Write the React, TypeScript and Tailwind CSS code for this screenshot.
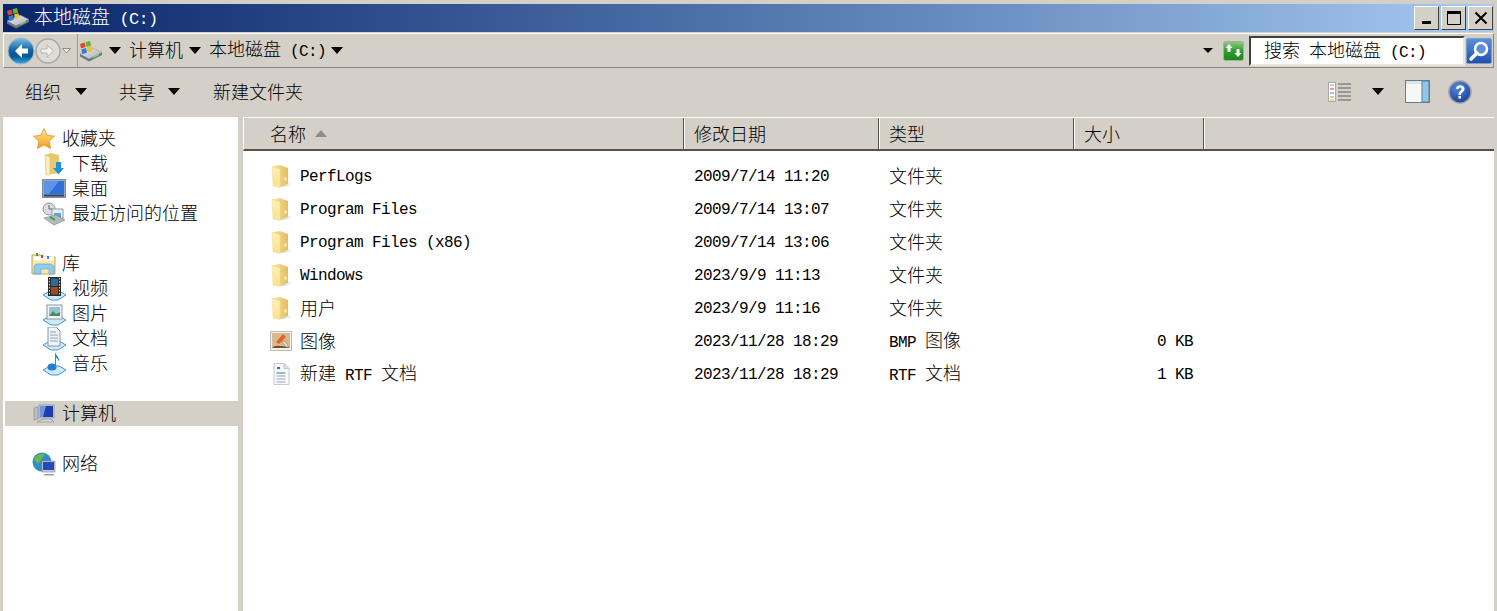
import type { ReactNode } from "react";

// Latin runs are half width mono, CJK runs are full width
function T({ children, big }: { children: string; big?: boolean }) {
  const parts = children.split(/([\x00-\x7f]+)/).filter(Boolean);
  return (
    <span className="whitespace-pre">
      {parts.map((p, i) =>
        /^[\x00-\x7f]+$/.test(p) ? (
          <span key={i} className={big ? "font-['Liberation_Mono',monospace] text-[17px] tracking-[-0.7px]" : "font-['Liberation_Mono',monospace] text-[16px] tracking-[-0.6px]"}>
            {p}
          </span>
        ) : (
          <span key={i} className={big ? "font-['Noto_Sans_CJK_SC',sans-serif] text-[19px] font-light" : "font-['Noto_Sans_CJK_SC',sans-serif] text-[18px] font-light"}>
            {p}
          </span>
        )
      )}
    </span>
  );
}

function Caret({ className = "" }: { className?: string }) {
  return (
    <svg width="12" height="7" viewBox="0 0 12 7" className={className}>
      <path d="M0 0h12L6 7z" fill="#000" />
    </svg>
  );
}

function DriveIcon({ size = 24 }: { size?: number }) {
  return (
    <svg width={size} height={size} viewBox="0 0 24 24">
      <defs>
        <linearGradient id="dr" x1="0" y1="0" x2="1" y2="1">
          <stop offset="0" stopColor="#e8ecef" />
          <stop offset="1" stopColor="#a9b0b6" />
        </linearGradient>
      </defs>
      <path d="M1 15 14 9l9 4.500L10 20z" fill="url(#dr)" stroke="#8a8f94" strokeWidth=".5" />
      <path d="M1 15v2.500L10 22.500 23 16v-2.500L10 20z" fill="#6f777e" />
      <path d="M14 18.500l6-3" stroke="#7fe05a" strokeWidth="1.200" />
      <path d="M1 5l4.500-1.500 1.200 4.500L2 9.500z" fill="#dc4a28" />
      <path d="M6.500 3.200 11 2l1.200 4.500L7.700 8z" fill="#6ab42e" />
      <path d="M2.300 10.500l4.600-1.600 1.200 4.500-4.600 1.800z" fill="#2c7fd6" />
      <path d="M8 8.600l4.500-1.300 1.200 4.500-4.500 1.500z" fill="#f2c12e" />
    </svg>
  );
}

function FolderIcon() {
  return (
    <svg width="24" height="24" viewBox="0 0 24 24">
      <defs>
        <linearGradient id="fd" x1="0" y1="0" x2="1" y2="0">
          <stop offset="0" stopColor="#f7e7a4" />
          <stop offset="1" stopColor="#e3bd5e" />
        </linearGradient>
        <linearGradient id="fd2" x1="0" y1="0" x2="0" y2="1">
          <stop offset="0" stopColor="#fdf0b4" />
          <stop offset="1" stopColor="#fbe387" />
        </linearGradient>
        <linearGradient id="fs" x1="0" y1="0" x2="1" y2="0">
          <stop offset="0" stopColor="#bdbdbd" />
          <stop offset="1" stopColor="#ffffff" />
        </linearGradient>
      </defs>
      <path d="M10 17l13 2v3l-13 1z" fill="url(#fs)" />
      <path d="M3 2.500 11 1l8 3v16l-9 2.500z" fill="url(#fd)" />
      <path d="M3 2.500l8 2.500v18.500L4 22z" fill="url(#fd2)" stroke="#edd692" strokeWidth=".4" />
      <path d="M15.500 13.500h2v3h-2z" fill="#fff3bf" />
    </svg>
  );
}

function StarIcon() {
  return (
    <svg width="24" height="24" viewBox="0 0 24 24">
      <defs>
        <linearGradient id="st" x1="0" y1="0" x2="0" y2="1">
          <stop offset="0" stopColor="#ffe999" />
          <stop offset="1" stopColor="#f79a14" />
        </linearGradient>
      </defs>
      <path d="M12 1.500l3.200 6.800 7.300.9-5.400 5 1.500 7.300L12 18l-6.600 3.500 1.500-7.300-5.400-5 7.300-.9z" fill="url(#st)" stroke="#e3932a" strokeWidth=".8" />
    </svg>
  );
}

function DownloadIcon() {
  return (
    <svg width="22" height="24" viewBox="0 0 22 24">
      <path d="M2 3l6-2 8 2v18L3 23z" fill="#e9c870" />
      <path d="M2 3l5 2v18L3 23z" fill="#fbeeb8" stroke="#d3b86e" strokeWidth=".5" />
      <path d="M13 10h5v6h3l-5.500 6.500L10 16h3z" fill="#1c95e0" />
    </svg>
  );
}

function DesktopIcon() {
  return (
    <svg width="24" height="20" viewBox="0 0 24 20">
      <rect x=".5" y=".5" width="23" height="18" fill="#9aa7b5" stroke="#7e8a97" />
      <path d="M2 2h20v13H2z" fill="#2f6fd8" />
      <path d="M2 2h15L7 15H2z" fill="#5b94ea" />
      <path d="M2 15.500h20v2H2z" fill="#26425f" />
    </svg>
  );
}

function RecentIcon() {
  return (
    <svg width="24" height="24" viewBox="0 0 24 24">
      <circle cx="7" cy="7" r="6" fill="#d9dee2" stroke="#8b9298" />
      <path d="M7 3v4h3" stroke="#5a6066" fill="none" />
      <path d="M10 7h11v10H10z" fill="#e7eef5" stroke="#8f9aa5" />
      <path d="M12 11h7v5h-7z" fill="#5aa7dd" />
      <path d="M2 16l12-3 9 5-11 5z" fill="#b4b9bd" stroke="#7c8186" strokeWidth=".6" />
      <path d="M8 15l5 3" stroke="#2e9b52" strokeWidth="2" />
    </svg>
  );
}

function LibraryIcon() {
  return (
    <svg width="26" height="24" viewBox="0 0 26 24">
      <path d="M1 3h9l2 2h12v17H1z" fill="#fbe7a8" stroke="#c6a45a" />
      <path d="M3 4.500h20v4H3z" fill="#fff" />
      <rect x="5" y="1" width="2" height="3" fill="#3aa13a" />
      <rect x="10" y="3" width="2" height="3" fill="#d8352a" />
      <rect x="16" y="4" width="2" height="3" fill="#3b82d6" />
      <path d="M3 22V14l2-2h15l3 2v8h-5v-5h-8v5z" fill="#8fcbef" stroke="#5a9ec8" strokeWidth=".6" />
    </svg>
  );
}

function Shelf() {
  return <path d="M1 18l7-4h9l7 4-8 5H9z" fill="#cfe9f8" stroke="#3f9ad6" strokeWidth="1" />;
}

function VideoIcon() {
  return (
    <svg width="24" height="24" viewBox="0 0 24 24">
      <Shelf />
      <rect x="6" y="0" width="13" height="19" fill="#2a2a2a" />
      <rect x="9" y="1.500" width="7" height="7.500" fill="#2d6a9a" />
      <rect x="9" y="10" width="7" height="7.500" fill="#9c4a24" />
      <path d="M7.500 1v18M17.500 1v18" stroke="#d8d8d8" strokeDasharray="1.500 1.500" />
    </svg>
  );
}

function PictureIcon() {
  return (
    <svg width="24" height="24" viewBox="0 0 24 24">
      <Shelf />
      <rect x="5" y="3" width="15" height="14" fill="#f3f5f7" stroke="#8a96a2" />
      <rect x="7" y="5" width="11" height="9" fill="#8ec5dd" />
      <path d="M7 14l4-5 3 3 4-2v4z" fill="#4f8a55" />
    </svg>
  );
}

function DocIcon() {
  return (
    <svg width="24" height="24" viewBox="0 0 24 24">
      <Shelf />
      <path d="M6 0h8l4 4v15H6z" fill="#f1f3f6" stroke="#8a96a2" />
      <path d="M8 5h6M8 8h8M8 11h8M8 14h8" stroke="#8ea1b5" />
    </svg>
  );
}

function MusicIcon() {
  return (
    <svg width="24" height="24" viewBox="0 0 24 24">
      <Shelf />
      <ellipse cx="10" cy="15" rx="4.500" ry="3.500" fill="#1f7fd0" />
      <path d="M13 15V0c1 4 5 5 4 10-1-3-2-4-3-4v9z" fill="#2c8fdc" />
    </svg>
  );
}

function ComputerIcon() {
  return (
    <svg width="22" height="22" viewBox="0 0 22 22">
      <path d="M1 5l4-1v12l-4 1z" fill="#b9bfc5" stroke="#80868c" strokeWidth=".6" />
      <path d="M6 2h15v13H6z" fill="#c9ced3" stroke="#7e848a" strokeWidth=".6" />
      <path d="M7 3h13v11H7z" fill="#1d3fae" />
      <path d="M7 3h6l-3 11H7z" fill="#6c93e4" />
      <path d="M4 19l6-3h8l3 3z" fill="#cfd3d7" stroke="#8a8f94" strokeWidth=".6" />
    </svg>
  );
}

function NetworkIcon() {
  return (
    <svg width="24" height="24" viewBox="0 0 24 24">
      <circle cx="10" cy="10" r="9.500" fill="#2d8fc4" />
      <path d="M3 5c3-3 7-4 10-3-1 3-3 3-4 6s-3 4-5 2-2-3-1-5z" fill="#6bb749" />
      <path d="M12 13l3-1 1 4-3 2z" fill="#5fb04a" />
      <path d="M10 9h13v11H10z" fill="#c9ced3" stroke="#7e848a" strokeWidth=".6" />
      <path d="M11 10h11v8H11z" fill="#2748b8" />
      <path d="M12 22h10v1.500H12z" fill="#9aa0a6" />
    </svg>
  );
}

function BmpIcon() {
  return (
    <svg width="24" height="22" viewBox="0 0 24 22">
      <rect x="1.500" y="1.500" width="21" height="19" fill="#f4f1ea" stroke="#b9b9b9" />
      <rect x="3" y="3" width="18" height="15" fill="#d9b98c" />
      <path d="M3 18c3-3 7-3 18 0z" fill="#7a4a2a" />
      <path d="M7 12l7-8 3 3-7 7z" fill="#e5622a" />
      <path d="M13 12l4 5h3l-4-6z" fill="#e8e3c8" stroke="#76806a" strokeWidth=".6" />
    </svg>
  );
}

function RtfIcon() {
  return (
    <svg width="22" height="24" viewBox="0 0 22 24">
      <path d="M4 1.500h10l5 5V22.500H4z" fill="#f6f8fa" stroke="#c4cbd2" />
      <path d="M14 1.500v5h5z" fill="#dbe2e9" stroke="#c4cbd2" />
      <path d="M7 6h3" stroke="#3f67c8" strokeWidth="2" />
      <path d="M6.500 11h9" stroke="#8fc0d8" strokeWidth="2" />
      <path d="M6.500 14h9M6.500 17h9M6.500 20h9" stroke="#98a8b8" />
    </svg>
  );
}

function BackButton() {
  return (
    <svg width="28" height="28" viewBox="0 0 28 28">
      <defs>
        <linearGradient id="bk" x1="0" y1="0" x2="0" y2="1">
          <stop offset="0" stopColor="#7fbfe6" />
          <stop offset=".45" stopColor="#1566a6" />
          <stop offset=".7" stopColor="#0a5590" />
          <stop offset="1" stopColor="#29b0ea" />
        </linearGradient>
      </defs>
      <circle cx="14" cy="14" r="13" fill="url(#bk)" stroke="#a7b8c6" />
      <path d="M15 7l-7 7 7 7v-4.500h6v-5h-6z" fill="#fff" />
    </svg>
  );
}

function ForwardButton() {
  return (
    <svg width="26" height="26" viewBox="0 0 26 26">
      <circle cx="13" cy="13" r="12" fill="#dedbd5" stroke="#a9a7a2" strokeWidth="1.500" />
      <path d="M12 7l6.500 6-6.500 6v-4H6v-4h6z" fill="#f2f1ee" stroke="#b5b3ae" />
    </svg>
  );
}

function WinBtn({ children }: { children: ReactNode }) {
  return (
    <div className="flex h-[24px] w-[25px] items-center justify-center border border-t-white border-l-white border-r-[#404040] border-b-[#404040] bg-[#d4d0c8]">
      {children}
    </div>
  );
}

const favorites: [ReactNode, string][] = [
  [<DownloadIcon />, "下载"],
  [<DesktopIcon />, "桌面"],
  [<RecentIcon />, "最近访问的位置"],
];

const libraries: [ReactNode, string][] = [
  [<VideoIcon />, "视频"],
  [<PictureIcon />, "图片"],
  [<DocIcon />, "文档"],
  [<MusicIcon />, "音乐"],
];

const files: [ReactNode, string, string, string, string][] = [
  [<FolderIcon />, "PerfLogs", "2009/7/14 11:20", "文件夹", ""],
  [<FolderIcon />, "Program Files", "2009/7/14 13:07", "文件夹", ""],
  [<FolderIcon />, "Program Files (x86)", "2009/7/14 13:06", "文件夹", ""],
  [<FolderIcon />, "Windows", "2023/9/9 11:13", "文件夹", ""],
  [<FolderIcon />, "用户", "2023/9/9 11:16", "文件夹", ""],
  [<BmpIcon />, "图像", "2023/11/28 18:29", "BMP 图像", "0 KB"],
  [<RtfIcon />, "新建 RTF 文档", "2023/11/28 18:29", "RTF 文档", "1 KB"],
];

function NavHead({ icon, label }: { icon: ReactNode; label: string }) {
  return (
    <div className="flex h-[25px] items-center pl-[23px]">
      <div className="flex w-[36px] items-center justify-center">{icon}</div>
      <span className="pb-[3px]"><T>{label}</T></span>
    </div>
  );
}

function NavItem({ icon, label }: { icon: ReactNode; label: string }) {
  return (
    <div className="flex h-[25px] items-center pl-[38px]">
      <div className="mr-[5px] flex w-[26px] items-center justify-center">{icon}</div>
      <span className="pb-[3px]"><T>{label}</T></span>
    </div>
  );
}

function HeaderCell({ label, w, sort }: { label: string; w: string; sort?: boolean }) {
  return (
    <div className={`${w} flex h-full items-center border-r border-r-[#55534f] shadow-[1px_0_0_#fff]`}>
      <T>{label}</T>
      {sort && (
        <svg width="12" height="7" viewBox="0 0 12 7" className="ml-[9px]">
          <path d="M0 7h12L6 0z" fill="#8f8d88" />
        </svg>
      )}
    </div>
  );
}

export default function App() {
  return (
    <div className="flex h-[611px] w-[1497px] flex-col overflow-hidden bg-[#d4d0c8] pt-[4px] pr-[3px] pl-[3px] leading-none text-black">
      {/* title bar */}
      <div className="flex h-[28px] shrink-0 items-center justify-between bg-gradient-to-r from-[#0a246a] to-[#a6caf0] pr-[1px] text-white">
        <div className="flex items-center gap-[4px] pl-[3px]">
          <DriveIcon />
          <span className="pb-[2px]"><T big>本地磁盘 (C:)</T></span>
        </div>
        <div className="flex items-center gap-[2px]">
          <WinBtn>
            <svg width="14" height="14" viewBox="0 0 14 14"><path d="M2 10h9v3H2z" fill="#000" /></svg>
          </WinBtn>
          <WinBtn>
            <svg width="16" height="16" viewBox="0 0 16 16"><path d="M1.500 1.500h13v13h-13z" fill="none" stroke="#000" /><path d="M1 1h14v3H1z" fill="#000" /></svg>
          </WinBtn>
          <WinBtn>
            <svg width="14" height="14" viewBox="0 0 14 14"><path d="M1.500 1.500l11 11m0-11l-11 11" stroke="#000" strokeWidth="2" /></svg>
          </WinBtn>
        </div>
      </div>

      {/* address bar */}
      <div className="mt-[1px] flex h-[35px] shrink-0 items-center border border-t-white border-l-white border-r-[#8a8782] border-b-[#8a8782] pr-[1px]">
        <div className="flex w-[73px] shrink-0 items-center pl-[3px]">
          <BackButton />
          <ForwardButton />
          <svg width="9" height="6" viewBox="0 0 9 6" className="ml-[1px]"><path d="M.5.500h8L4.500 5z" fill="#eee" stroke="#8e8e8e" /></svg>
        </div>
        <div className="flex h-full grow items-center border-l border-l-[#a09d97] pl-[1px]">
          <DriveIcon />
          <Caret className="ml-[6px]" />
          <span className="ml-[8px] pb-[3px]"><T>计算机</T></span>
          <Caret className="ml-[6px]" />
          <span className="ml-[8px] pb-[3px]"><T>本地磁盘 (C:)</T></span>
          <Caret className="ml-[5px]" />
          <svg width="10" height="5" viewBox="0 0 10 5" className="mr-[10px] ml-auto"><path d="M0 0h10L5 5z" fill="#000" /></svg>
          <svg width="21" height="20" viewBox="0 0 21 20" className="mr-[5px]">
            <defs>
              <linearGradient id="rf" x1="0" y1="0" x2="0" y2="1">
                <stop offset="0" stopColor="#8fd07f" />
                <stop offset=".5" stopColor="#2e9c2e" />
                <stop offset="1" stopColor="#178a17" />
              </linearGradient>
            </defs>
            <rect x=".5" y=".5" width="20" height="19" rx="2" fill="url(#rf)" stroke="#a0b0a0" />
            <path d="M6 3l3.500 4H7.500v4h-3V7H2.500zM15 16l-3.500-4h2V8h3v4h2z" fill="#fff" />
          </svg>
        </div>
        <div className="flex h-[30px] w-[216px] shrink-0 items-center border-2 border-t-[#404040] border-l-[#404040] border-r-[#e8e6e0] border-b-[#e8e6e0] bg-white pl-[13px]">
          <T>搜索 本地磁盘 (C:)</T>
        </div>
        <div className="ml-[1px] flex h-[26px] w-[26px] shrink-0 items-center justify-center rounded-[2px] border border-[#7f9db9] bg-gradient-to-b from-[#5b8fe0] to-[#1f4fb0]">
          <svg width="22" height="22" viewBox="0 0 22 22">
            <circle cx="13" cy="9" r="6" fill="#5a8fdc" stroke="#fff" strokeWidth="2.500" />
            <path d="M9 13l-6 6" stroke="#fff" strokeWidth="3.500" strokeLinecap="round" />
          </svg>
        </div>
      </div>

      {/* command bar */}
      <div className="flex h-[47px] shrink-0 items-center pr-[22px] pl-[22px]">
        <T>组织</T>
        <Caret className="ml-[14px]" />
        <span className="ml-[32px]"><T>共享</T></span>
        <Caret className="ml-[13px]" />
        <span className="ml-[33px]"><T>新建文件夹</T></span>
        <div className="ml-auto flex items-center">
          <svg width="24" height="22" viewBox="0 0 24 22">
            <rect x=".5" y="1.500" width="7" height="19" fill="#fff" stroke="#a8a8a8" />
            <path d="M2 4h4" stroke="#9a9a9a" /><path d="M2 8h4" stroke="#d8352a" /><path d="M2 12h4" stroke="#3b82d6" /><path d="M2 16h4" stroke="#6fb03a" /><path d="M2 19h4" stroke="#e0b030" />
            <path d="M10 3h13M10 7h13M10 11h13M10 15h13M10 19h13" stroke="#5e5e62" />
          </svg>
          <Caret className="ml-[20px]" />
          <svg width="25" height="23" viewBox="0 0 25 23" className="ml-[21px]">
            <rect x=".5" y=".5" width="24" height="22" fill="#f7f7f5" stroke="#5d7f99" />
            <path d="M1 1h23v3H1z" fill="#dfe3e6" />
            <rect x="17" y="1" width="7" height="21" fill="#8fc8e6" stroke="#5d7f99" />
          </svg>
          <svg width="24" height="24" viewBox="0 0 24 24" className="ml-[18px]">
            <defs>
              <radialGradient id="hp" cx=".4" cy=".3" r=".8">
                <stop offset="0" stopColor="#5a88dc" />
                <stop offset="1" stopColor="#123a94" />
              </radialGradient>
            </defs>
            <circle cx="12" cy="12" r="11" fill="url(#hp)" stroke="#9a9aa0" strokeWidth="1.500" />
            <path d="M8 9c0-5 8.500-5 8.500 0 0 3-3.500 3-3.500 6h-2.500c0-4 3-4 3-6 0-2-3-2-3 0z" fill="#fff" />
            <rect x="10.500" y="16" width="2.500" height="2.500" fill="#fff" />
          </svg>
        </div>
      </div>

      {/* body */}
      <div className="flex min-h-0 grow pt-[2px]">
        <aside className="w-[235px] shrink-0 bg-white pt-[9px]">
          <NavHead icon={<StarIcon />} label="收藏夹" />
          {favorites.map(([icon, label]) => (
            <NavItem key={label} icon={icon} label={label} />
          ))}
          <div className="h-[25px]" />
          <NavHead icon={<LibraryIcon />} label="库" />
          {libraries.map(([icon, label]) => (
            <NavItem key={label} icon={icon} label={label} />
          ))}
          <div className="h-[25px]" />
          <div className="ml-[2px] bg-[#d4d0c8] [&>div]:pl-[21px]">
            <NavHead icon={<ComputerIcon />} label="计算机" />
          </div>
          <div className="h-[25px]" />
          <NavHead icon={<NetworkIcon />} label="网络" />
        </aside>

        <main className="ml-[5px] flex min-w-0 grow flex-col bg-white">
          <div className="flex h-[34px] shrink-0 items-center border-t border-l border-t-white border-l-white border-b-2 border-b-[#55534f] bg-[#d4d0c8]">
            <HeaderCell w="w-[440px] pl-[26px]" label="名称" sort />
            <HeaderCell w="w-[195px] pl-[10px]" label="修改日期" />
            <HeaderCell w="w-[195px] pl-[10px]" label="类型" />
            <HeaderCell w="w-[130px] pl-[10px]" label="大小" />
          </div>
          <div className="pt-[8px]">
            {files.map(([icon, name, date, type, size]) => (
              <div key={name} className="grid h-[33px] grid-cols-[441px_195px_195px_130px] items-center">
                <div className="flex items-center pl-[26px]">
                  <div className="mr-[7px] flex w-[24px] items-center justify-center">{icon}</div>
                  <T>{name}</T>
                </div>
                <div className="pl-[10px]"><T>{date}</T></div>
                <div className="pl-[10px]"><T>{type}</T></div>
                <div className="pr-[11px] text-right"><T>{size}</T></div>
              </div>
            ))}
          </div>
        </main>
      </div>
    </div>
  );
}
